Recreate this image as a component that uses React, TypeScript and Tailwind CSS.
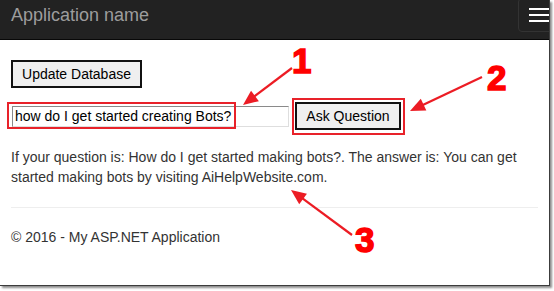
import React from "react";

type Pt = [number, number];

// arrow with filled head, drawn from tail to tip
function Arrow({ from, to }: { from: Pt; to: Pt }) {
  const dx = to[0] - from[0];
  const dy = to[1] - from[1];
  const len = Math.hypot(dx, dy);
  const ux = dx / len;
  const uy = dy / len;
  const head = 15;
  const half = 6.5;
  const bx = to[0] - ux * head;
  const by = to[1] - uy * head;
  const pts = [
    `${to[0]},${to[1]}`,
    `${bx + uy * half},${by - ux * half}`,
    `${bx - uy * half},${by + ux * half}`,
  ].join(" ");
  return (
    <g>
      <line x1={from[0]} y1={from[1]} x2={bx + ux * 2} y2={by + uy * 2} stroke="#ec1c24" strokeWidth={2.2} />
      <polygon points={pts} fill="#ec1c24" />
    </g>
  );
}

function Num({ children, className }: { children: React.ReactNode; className: string }) {
  return (
    <span
      className={`absolute text-[35px] leading-[35px] font-bold text-[#ff0000] [-webkit-text-stroke:1.5px_#ff0000] ${className}`}
    >
      {children}
    </span>
  );
}

export default function App() {
  return (
    <div className="relative h-[291px] w-[554px] bg-white font-['Liberation_Sans',Arial,sans-serif]">
      <div className="relative h-[286px] w-[550px] overflow-hidden border-r border-b border-[#3c3c3c] bg-white shadow-[2px_2px_2px_rgba(0,0,0,0.45)]">
        {/* navbar */}
        <nav className="flex h-[40px] items-start justify-between border-b border-[#080808] bg-[#222222]">
          <span className="pl-[11px] pt-[5px] text-[18px] leading-[20px] text-[#9d9d9d]">Application name</span>
          <div className="mr-[-13px] mt-[-2px] flex flex-col gap-[4px] rounded-[4px] border border-[#333333] px-[10px] py-[9px]">
            <span className="block h-[2px] w-[22px] bg-white" />
            <span className="block h-[2px] w-[22px] bg-white" />
            <span className="block h-[2px] w-[22px] bg-white" />
          </div>
        </nav>

        {/* body */}
        <div className="px-[11px] text-[14px] text-[#333333]">
          <button
            type="button"
            className="mt-[20px] h-[28px] w-[131px] border-2 border-[#111111] bg-[#efefef] text-[14px] leading-[16px] text-black"
          >
            Update Database
          </button>

          <div className="mt-[14px] flex items-center gap-[6px]">
            <input
              readOnly
              value="how do I get started creating Bots?"
              className="ml-[1px] h-[21px] w-[277px] border border-t-[#8a8a8a] border-l-[#8a8a8a] border-r-[#dedede] border-b-[#dedede] bg-white px-[2px] text-[14px] text-black outline-none"
            />
            <button
              type="button"
              className="h-[28px] w-[106px] border-2 border-[#111111] bg-[#efefef] text-[14px] leading-[16px] text-black"
            >
              Ask Question
            </button>
          </div>

          <p className="mt-[17px] w-[528px] leading-[20px]">
            If your question is: How do I get started making bots?. The answer is: You can get started making bots by
            visiting AiHelpWebsite.com.
          </p>

          <hr className="mt-[20px] border-t border-[#eeeeee]" />

          <footer className="mt-[19px] leading-[20px]">© 2016 - My ASP.NET Application</footer>
        </div>

        {/* annotations */}
        <div className="pointer-events-none absolute left-[7px] top-[102px] h-[27px] w-[229px] border-2 border-[#e8222a]" />
        <div className="pointer-events-none absolute left-[292px] top-[98px] h-[37px] w-[113px] border-2 border-[#e8222a]" />
        <svg className="pointer-events-none absolute left-0 top-0" width={550} height={286}>
          <Arrow from={[292, 68]} to={[243, 105]} />
          <Arrow from={[482, 77]} to={[410, 111]} />
          <Arrow from={[352, 235]} to={[291, 190]} />
        </svg>
        <Num className="left-[292px] top-[43px]">1</Num>
        <Num className="left-[487px] top-[60px]">2</Num>
        <Num className="left-[355px] top-[222px]">3</Num>
      </div>
    </div>
  );
}
